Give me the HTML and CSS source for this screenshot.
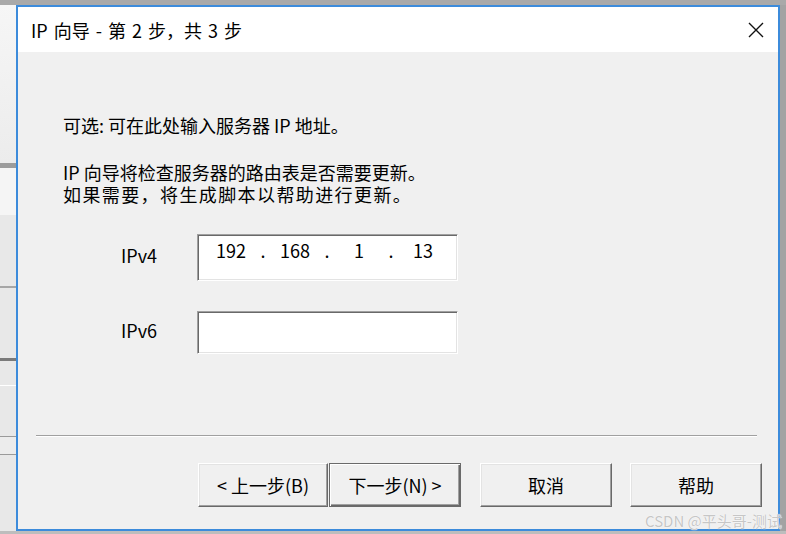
FILE: index.html
```html
<!DOCTYPE html>
<html lang="zh-CN">
<head>
    <meta charset="utf-8" />
    <title>IP 向导</title>
    <link rel="stylesheet" href="styles.css">
</head>
<body>
<div class="desk">
    <div class="top-band"></div>
    <div class="desk-row">
        <!-- bits of the window behind the dialog -->
        <div class="side-strip"></div>

        <div class="dialog">
            <div class="titlebar">
                <span class="title">IP 向导 - 第 2 步，共 3 步</span>
                <svg class="close" width="16" height="16" viewBox="0 0 16 16">
                    <path d="M1 1 L15 15 M15 1 L1 15" stroke="#111" stroke-width="1.4" fill="none" />
                </svg>
            </div>

            <div class="content">
                <p class="intro">可选: 可在此处输入服务器 IP 地址。</p>
                <p class="note">IP 向导将检查服务器的路由表是否需要更新。<br><span class="note-wide">如果需要，将生成脚本以帮助进行更新。</span></p>

                <div class="field-row ipv4-row">
                    <div class="field-label">IPv4</div>
                    <div class="ip-box ipv4-box">
                        <span class="octet">192</span><span class="dot">.</span>
                        <span class="octet">168</span><span class="dot">.</span>
                        <span class="octet">1</span><span class="dot">.</span>
                        <span class="octet">13</span>
                    </div>
                </div>

                <div class="field-row ipv6-row">
                    <div class="field-label">IPv6</div>
                    <div class="ip-box ipv6-box"></div>
                </div>

                <div class="separator"></div>

                <div class="buttons">
                    <div class="nav-group">
                        <button class="btn">&lt; 上一步(B)</button>
                        <button class="btn btn-default">下一步(N) &gt;</button>
                    </div>
                    <button class="btn">取消</button>
                    <button class="btn">帮助</button>
                </div>
            </div>

            <div class="watermark">CSDN @平头哥-测试</div>
        </div>

        <div class="right-strip"></div>
    </div>
    <div class="bottom-band"></div>
</div>
</body>
</html>
```

FILE: styles.css
```css
/* Page: the dialog sits over a grey desktop / other window */
body {
    margin: 0;
    background-color: #a9a9a9;
    font-family: "Noto Sans CJK SC", "Noto Sans", sans-serif;
    color: #000;
}
.desk {
    width: 786px;
    height: 534px;
    display: flex;
    flex-direction: column;
    overflow: hidden;
}
.top-band {
    height: 5px;
    background-color: #a9a9a9;
}
.desk-row {
    display: flex;
    height: 526px;
}
/* Window behind: just a few stripes show on the left */
.side-strip {
    width: 16px;
    background: linear-gradient(to bottom,
        #f6f6f6 0px, #ececec 158px,
        #9c9c9c 158px, #9c9c9c 163px,
        #f5f5f5 163px, #f5f5f5 210px,
        #e8e8e8 210px, #e8e8e8 281px,
        #a6a6a6 281px, #a6a6a6 283px,
        #e8e8e8 283px, #e8e8e8 353px,
        #7a7a7a 353px, #7a7a7a 356px,
        #e8e8e8 356px, #e8e8e8 380px,
        #ffffff 380px, #ffffff 381px,
        #e8e8e8 381px, #e8e8e8 431px,
        #9a9a9a 431px, #9a9a9a 432px,
        #ececec 432px, #ececec 449px,
        #9a9a9a 449px, #9a9a9a 450px,
        #e8e8e8 450px);
}
.right-strip {
    width: 6px;
    background-color: #a3a3a3;
}
.bottom-band {
    height: 3px;
    background-color: #bdbdbd;
}

/* Dialog window */
.dialog {
    position: relative;
    width: 760px;
    border: 2px solid #3c8bdb;
    background-color: #f0f0f0;
    display: flex;
    flex-direction: column;
}
.titlebar {
    height: 45px;
    background-color: #fff;
    display: flex;
    align-items: center;
    padding: 0 14px 0 13px;
    justify-content: space-between;
}
.title {
    font-size: 18px;
    word-spacing: 2px;
    margin-top: 1px;
}

.content {
    flex: 1;
    padding: 62px 0 0 45px;
    font-size: 18px;
    line-height: 22px;
}
.intro {
    margin: 0;
}
.note {
    margin: 25px 0 0 0;
}
.note-wide {
    letter-spacing: 1.4px;
}

/* IPv4 / IPv6 rows */
.field-row {
    display: flex;
    align-items: center;
    padding-left: 58px;
}
.ipv4-row {
    margin-top: 29px;
}
.ipv6-row {
    margin-top: 30px;
}
.field-label {
    width: 76px;
    margin-top: -6px;
}
.ip-box {
    background-color: #fff;
    border-top: 1px solid #a0a0a0;
    border-left: 1px solid #a0a0a0;
    border-bottom: 1px solid #fff;
    border-right: 1px solid #fff;
    box-shadow: inset 1px 1px 0 #696969, inset -1px -1px 0 #e3e3e3;
    display: flex;
    align-items: flex-start;
    padding: 4px 0 0 14px;
    box-sizing: border-box;
}
.ipv4-box {
    width: 261px;
    height: 47px;
}
.ipv6-box {
    width: 261px;
    height: 43px;
}
.octet {
    width: 38px;
    text-align: center;
}
.dot {
    width: 26px;
    text-align: center;
}

/* etched line above the buttons */
.separator {
    margin: 81px 21px 0 -27px;
    height: 1px;
    background-color: #a0a0a0;
    border-bottom: 1px solid #fff;
}

.buttons {
    display: flex;
    justify-content: flex-end;
    gap: 18px;
    margin-top: 26px;
    padding-right: 16px;
}
.nav-group {
    display: flex;
    gap: 1px;
    margin-right: 1px;
}
.btn {
    width: 132px;
    height: 44px;
    font-family: inherit;
    font-size: 18px;
    color: #000;
    background-color: #f0f0f0;
    border-top: 1px solid #fff;
    border-left: 1px solid #fff;
    border-bottom: 1px solid #696969;
    border-right: 1px solid #696969;
    box-shadow: inset -1px -1px 0 #a0a0a0, inset 1px 1px 0 #e3e3e3;
    padding: 0;
}
.nav-group .btn:first-child {
    width: 130px;
}
.btn-default {
    border: 1px solid #6a6a6a;
    box-shadow: inset 1px 1px 0 #fff, inset -1px -1px 0 #696969, inset -2px -2px 0 #a0a0a0;
}

/* CSDN stamp over the corner */
.watermark {
    position: absolute;
    right: -4px;
    bottom: 0px;
    font-size: 15px;
    line-height: 17px;
    color: #c6c6c6;
    text-shadow: 0 0 1px #fff, 0 0 1px #fff;
}
```
